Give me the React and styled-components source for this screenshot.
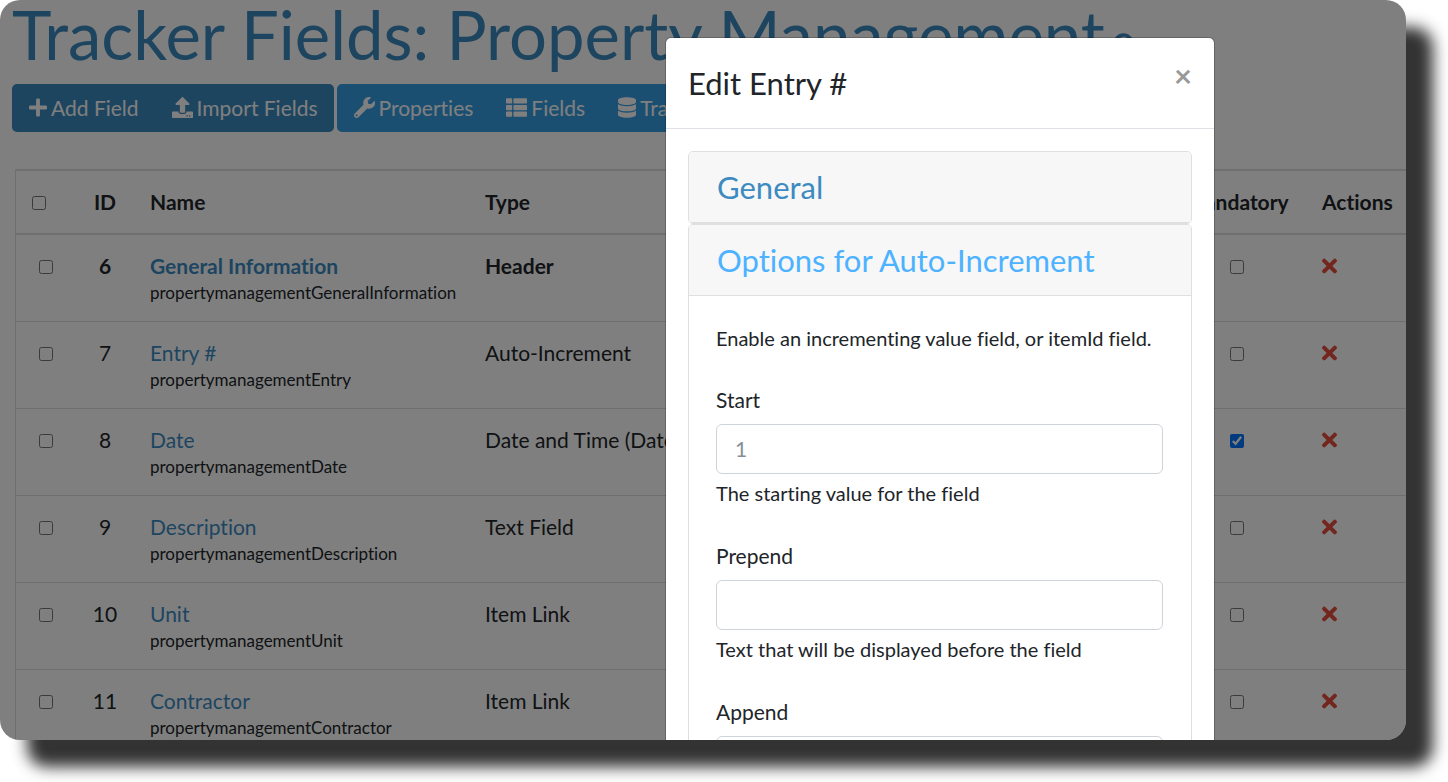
import React from "react";
import styled, { createGlobalStyle, ThemeProvider } from "styled-components";
import {
	FaDatabase,
	FaPlus,
	FaQuestionCircle,
	FaThList,
	FaTimes,
	FaUpload,
	FaWrench
} from "react-icons/fa";

const theme = {
	primary: "#3d8bc1",
	info: "#379fe5",
	active: "#4db2ff",
	danger: "#e74c3c",
	text: "#212529",
	border: "#dfdfdf",
	inputBorder: "#ced4da"
};

const fields = [
	{ id: 6, name: "General Information", perm: "propertymanagementGeneralInformation", type: "Header", header: true },
	{ id: 7, name: "Entry #", perm: "propertymanagementEntry", type: "Auto-Increment" },
	{ id: 8, name: "Date", perm: "propertymanagementDate", type: "Date and Time (Date Picker format)", mandatory: true },
	{ id: 9, name: "Description", perm: "propertymanagementDescription", type: "Text Field" },
	{ id: 10, name: "Unit", perm: "propertymanagementUnit", type: "Item Link" },
	{ id: 11, name: "Contractor", perm: "propertymanagementContractor", type: "Item Link" }
];

const options = [
	{ id: "start", label: "Start", placeholder: "1", help: "The starting value for the field" },
	{ id: "prepend", label: "Prepend", help: "Text that will be displayed before the field" },
	{ id: "append", label: "Append" }
];

const App = () => (
	<ThemeProvider theme={theme}>
		<GlobalStyle />
		<Shell>
			<Screen>
				<Page>
					<Title>
						Tracker Fields: Property Management
						<HelpLink href="#help" aria-label="Help">
							<FaQuestionCircle />
						</HelpLink>
					</Title>
					<Toolbar />
					<FieldTable />
				</Page>
				<Backdrop>
					<EditDialog />
				</Backdrop>
			</Screen>
		</Shell>
	</ThemeProvider>
);

const Toolbar = () => (
	<Bar>
		<ButtonGroup>
			<BarButton $narrow><FaPlus />Add Field</BarButton>
			<BarButton><FaUpload />Import Fields</BarButton>
		</ButtonGroup>
		<ButtonGroup $info>
			<BarButton><FaWrench />Properties</BarButton>
			<BarButton><FaThList />Fields</BarButton>
			<BarButton $narrow><FaDatabase />Tracker Items</BarButton>
		</ButtonGroup>
	</Bar>
);

const FieldTable = () => (
	<Table>
		<colgroup>
			<Col $width={60} />
			<Col $width={58} />
			<Col $width={335} />
			<col />
			<Col $width={138} />
			<Col $width={102} />
		</colgroup>
		<thead>
			<tr>
				<Th><Check aria-label="Select all" /></Th>
				<Th $center>ID</Th>
				<Th>Name</Th>
				<Th>Type</Th>
				<Th $center>Mandatory</Th>
				<Th>Actions</Th>
			</tr>
		</thead>
		<tbody>
			{fields.map(field => (
				<Row key={field.id} $header={field.header}>
					<Td $center><Check aria-label={`Select ${field.name}`} /></Td>
					<Td $center>{field.id}</Td>
					<Td>
						<Link href={`#field-${field.id}`}>{field.name}</Link>
						<PermName>{field.perm}</PermName>
					</Td>
					<Td>{field.type}</Td>
					<Td $center>
						<Check aria-label={`${field.name} mandatory`} defaultChecked={field.mandatory} />
					</Td>
					<Td>
						<RemoveButton aria-label={`Remove ${field.name}`}><FaTimes /></RemoveButton>
					</Td>
				</Row>
			))}
		</tbody>
	</Table>
);

const EditDialog = () => (
	<Dialog role="dialog" aria-labelledby="dialog-title">
		<DialogHeader>
			<DialogTitle id="dialog-title">Edit Entry #</DialogTitle>
			<CloseButton aria-label="Close">×</CloseButton>
		</DialogHeader>
		<DialogBody>
			<Card>
				<CardHeader><CardLink href="#general">General</CardLink></CardHeader>
			</Card>
			<Card>
				<CardHeader><CardLink href="#options" $active>Options for Auto-Increment</CardLink></CardHeader>
				<CardBody>
					<Intro>Enable an incrementing value field, or itemId field.</Intro>
					{options.map(option => (
						<FormGroup key={option.id}>
							<Label htmlFor={option.id}>{option.label}</Label>
							<Input id={option.id} placeholder={option.placeholder} />
							{option.help && <Help>{option.help}</Help>}
						</FormGroup>
					))}
				</CardBody>
			</Card>
		</DialogBody>
	</Dialog>
);

const GlobalStyle = createGlobalStyle`
	* {
		box-sizing: border-box;
	}

	body {
		margin: 0;
		background: #fff;
		color: ${theme.text};
		font: 21px/31px Lato, "Liberation Sans", sans-serif;
		font-variant-ligatures: none;
	}

	button, input {
		font: inherit;
		font-variant-ligatures: none;
	}
`;

const Shell = styled.div`
	height: 100vh;
	padding: 0 42px 42px 0;
	overflow: hidden;
`;

const Screen = styled.div`
	position: relative;
	height: 100%;
	overflow: hidden;
	border-radius: 20px;
	background: #fff;
	box-shadow: 27px 27px 15px #333;
`;

const Page = styled.div`
	padding-left: 12px;
`;

const Title = styled.h1`
	height: 68px;
	margin: 0 0 16px;
	color: ${({ theme }) => theme.primary};
	font-size: 67px;
	font-weight: 400;
	line-height: 68px;
	white-space: nowrap;
`;

const HelpLink = styled.a`
	margin-left: 8px;
	color: inherit;
	font-size: 21px;
	line-height: 21px;

	svg {
		vertical-align: 6px;
	}
`;

const Bar = styled.div`
	display: flex;
	gap: 3px;
	margin-bottom: 37px;
`;

const ButtonGroup = styled.div`
	display: flex;
	flex-shrink: 0;
	border-radius: 5px;
	background: ${({ theme, $info }) => ($info ? theme.info : theme.primary)};
`;

const BarButton = styled.button`
	display: flex;
	align-items: center;
	gap: 4px;
	height: 48px;
	padding: 0 16px 1px 17px;
	border: 0;
	background: transparent;
	color: #fff;
	white-space: nowrap;

	svg {
		width: ${({ $narrow }) => ($narrow ? 18 : 21)}px;
		height: 21px;
	}
`;

const Table = styled.table`
	width: calc(100% - 1px);
	margin-left: 3px;
	table-layout: fixed;
	border-collapse: separate;
	border-spacing: 0;
	border-left: 1px solid ${({ theme }) => theme.border};
`;

const Col = styled.col`
	width: ${({ $width }) => $width}px;
`;

const Th = styled.th`
	height: 66px;
	padding: 0 16px 2px;
	border: solid ${({ theme }) => theme.border};
	border-width: 2px 0;
	font-weight: 700;
	text-align: ${({ $center }) => ($center ? "center" : "left")};
	white-space: nowrap;
`;

const Row = styled.tr`
	font-weight: ${({ $header }) => ($header ? 700 : 400)};
`;

const Td = styled.td`
	height: 87px;
	padding: 15px 16px 0;
	border-bottom: 1px solid ${({ theme }) => theme.border};
	text-align: ${({ $center }) => ($center ? "center" : "left")};
	vertical-align: top;
	white-space: nowrap;
`;

const Check = styled.input.attrs({ type: "checkbox" })`
	width: 14px;
	height: 14px;
	margin: 0;
`;

const Link = styled.a`
	color: ${({ theme }) => theme.primary};
	text-decoration: none;
`;

const PermName = styled.div`
	font-size: 17px;
	font-weight: 400;
	line-height: 24px;
`;

const RemoveButton = styled.button`
	display: flex;
	align-items: center;
	height: 32px;
	padding: 0;
	border: 0;
	background: transparent;
	color: ${({ theme }) => theme.danger};

	svg {
		width: 15px;
		height: 22px;
	}
`;

const Backdrop = styled.div`
	position: absolute;
	inset: 0;
	display: flex;
	justify-content: flex-end;
	align-items: flex-start;
	padding: 37px 191px 0 0;
	background: rgba(0, 0, 0, 0.5);
`;

const Dialog = styled.section`
	width: 550px;
	border: 1px solid rgba(0, 0, 0, 0.2);
	border-radius: 6px;
	background: #fff;
	background-clip: padding-box;
`;

const DialogHeader = styled.header`
	display: flex;
	justify-content: space-between;
	align-items: flex-start;
	padding: 22px;
	border-bottom: 1px solid #dee2e6;
`;

const DialogTitle = styled.h4`
	margin: 0;
	font-size: 31px;
	font-weight: 400;
	line-height: 46px;
`;

const CloseButton = styled.button`
	padding: 0;
	border: 0;
	background: transparent;
	color: #999;
	font-size: 31px;
	font-weight: 700;
	line-height: 31px;
`;

const DialogBody = styled.div`
	padding: 22px;
`;

const Card = styled.div`
	border: 1px solid ${({ theme }) => theme.border};
	border-radius: 5px;
	background: #fff;
	overflow: hidden;
`;

const CardHeader = styled.div`
	padding: 17px 28px 16px;
	border-bottom: 1px solid ${({ theme }) => theme.border};
	background: #f7f7f7;
`;

const CardLink = styled.a`
	display: block;
	color: ${({ theme, $active }) => ($active ? theme.active : theme.primary)};
	font-size: 31px;
	line-height: 37px;
	text-decoration: none;
`;

const CardBody = styled.div`
	padding: 27px 28px 27px 27px;
`;

const Intro = styled.p`
	margin: 0 0 30px;
	font-size: 20px;
	white-space: nowrap;
`;

const FormGroup = styled.div`
	display: flex;
	flex-direction: column;
	margin-bottom: 31px;
`;

const Label = styled.label`
	margin-bottom: 9px;
`;

const Input = styled.input`
	width: 100%;
	height: 50px;
	padding: 0 18px 1px;
	border: 1px solid ${({ theme }) => theme.inputBorder};
	border-radius: 6px;
	background: #fff;
	color: #495057;

	&::placeholder {
		color: #868e96;
	}
`;

const Help = styled.span`
	margin-top: 4px;
	font-size: 20px;
`;

export default App;
